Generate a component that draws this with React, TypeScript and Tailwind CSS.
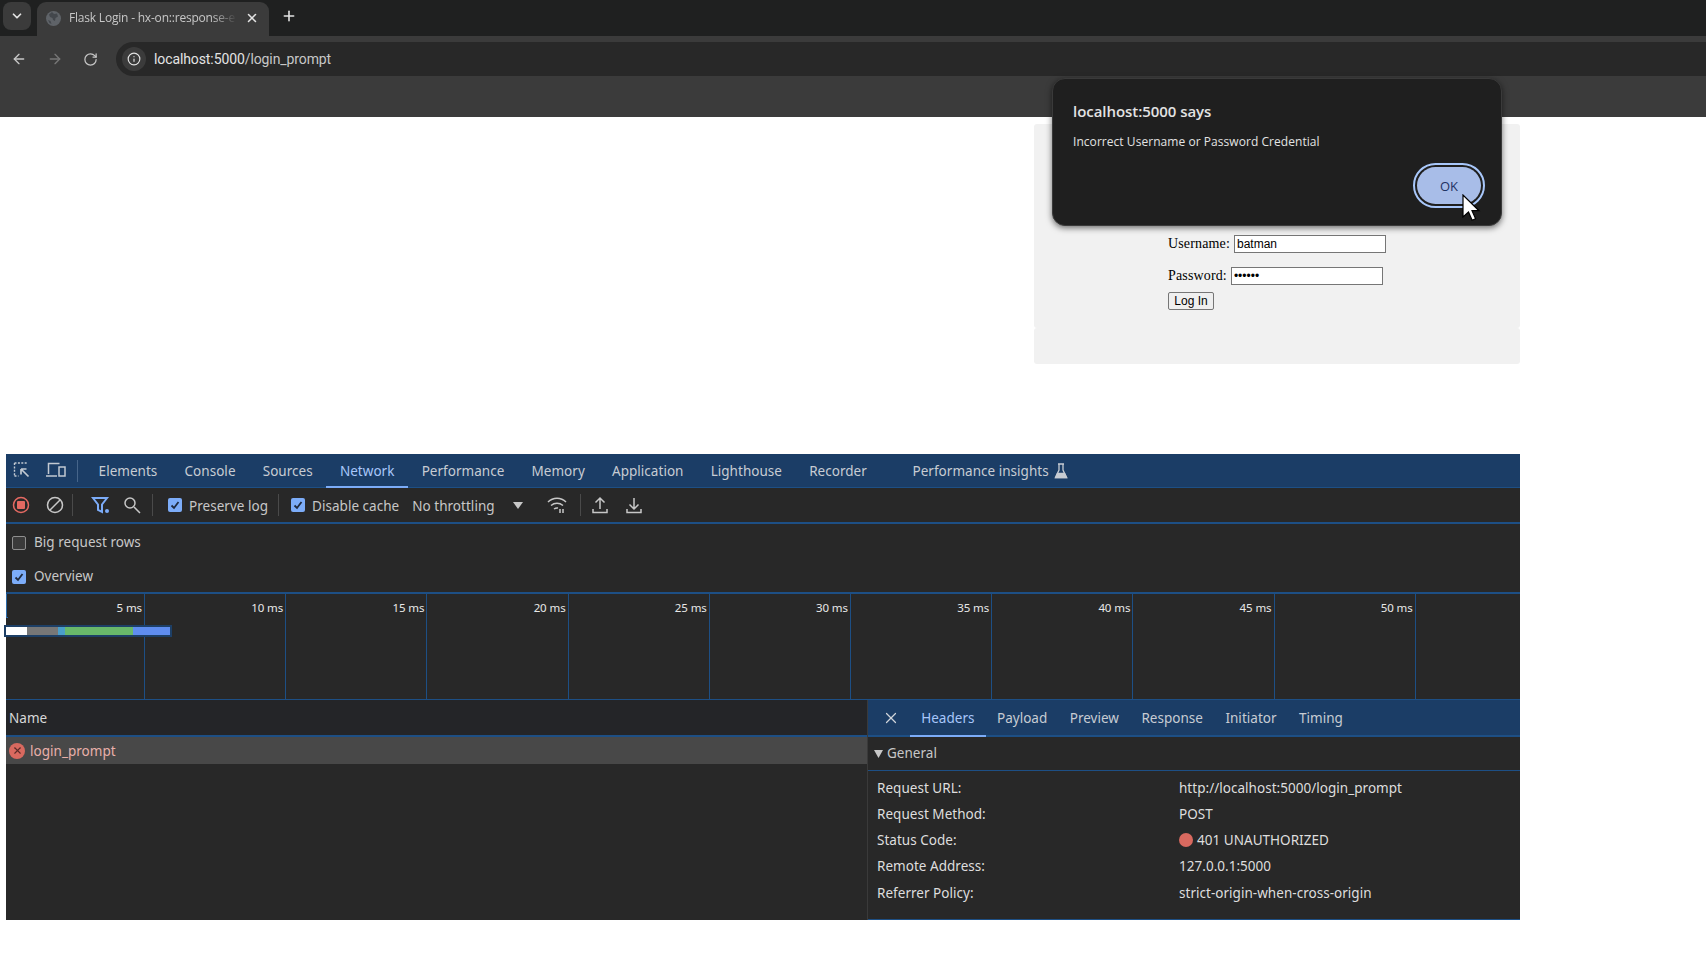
import { ArrowLeft, ArrowRight, RotateCw, Info, ChevronDown, X, Plus } from 'lucide-react'

const mainTabs = [
  { name: 'Elements' },
  { name: 'Console' },
  { name: 'Sources' },
  { name: 'Network', active: true },
  { name: 'Performance' },
  { name: 'Memory' },
  { name: 'Application' },
  { name: 'Lighthouse' },
  { name: 'Recorder' },
]

const detailTabs = ['Headers', 'Payload', 'Preview', 'Response', 'Initiator', 'Timing']

const ticks = ['5 ms', '10 ms', '15 ms', '20 ms', '25 ms', '30 ms', '35 ms', '40 ms', '45 ms', '50 ms']

const generalRows = [
  { label: 'Request URL:', value: 'http://localhost:5000/login_prompt' },
  { label: 'Request Method:', value: 'POST' },
  { label: 'Status Code:', value: '401 UNAUTHORIZED', status: true },
  { label: 'Remote Address:', value: '127.0.0.1:5000' },
  { label: 'Referrer Policy:', value: 'strict-origin-when-cross-origin' },
]

const Check = ({ checked }: { checked?: boolean }) =>
  checked ? (
    <span className="w-[14px] h-[14px] rounded-[2px] bg-[#7cacf8] flex items-center justify-center shrink-0">
      <svg width="10" height="10" viewBox="0 0 10 10" fill="none">
        <path d="M1.5 5.5 4 8l4.5-6" stroke="#1f2a3d" strokeWidth="1.8" />
      </svg>
    </span>
  ) : (
    <span className="w-[14px] h-[14px] rounded-[2px] border border-[#8e8e8e] bg-[#3a3a3a] shrink-0" />
  )

const Sep = ({ className }: { className: string }) => <span className={`w-px h-[22px] bg-[#4a4a4a] shrink-0 ${className}`} />

const Chrome = () => (
  <div className="h-[117px] bg-[#3b3b3b] shrink-0">
    {/* tab strip */}
    <div className="h-9 bg-[#1f2020] flex items-end">
      <div className="w-[28px] h-[28px] ml-[3px] mb-[6px] rounded-lg bg-[#3b3b3b] flex items-center justify-center text-[#e3e3e3]">
        <ChevronDown size={14} strokeWidth={3} />
      </div>
      <div className="w-[232px] h-[34px] ml-[6px] rounded-t-[9px] bg-[#3b3b3b] flex items-center pl-[9px] pb-[2px]">
        <svg className="shrink-0" width="15" height="15" viewBox="0 0 15 15">
          <circle cx="7.5" cy="7.5" r="7.5" fill="#5f6368" />
          <path d="M6 1 3 3.500 4 6l2.500 1 .5 2 2 1 .5-3L12 5.500 11 2.500 8 3z" fill="#43474c" />
          <path d="M2 9l2.500 1 1 3-2-1z" fill="#43474c" />
        </svg>
        <span className="ml-[8px] w-[168px] whitespace-nowrap text-[12px] text-[#c7c7c7] font-['Open_Sans',sans-serif] tracking-[-0.2px] [mask-image:linear-gradient(to_right,black_85%,transparent_100%)]">
          Flask Login - hx-on::response-e
        </span>
        <X size={14} strokeWidth={2.6} className="ml-[8px] text-[#e3e3e3]" />
      </div>
      <Plus size={16} strokeWidth={2.4} className="ml-[12px] mb-[12px] text-[#e3e3e3]" />
    </div>
    {/* address row */}
    <div className="h-[34px] mt-[6px] flex items-center">
      <ArrowLeft size={16} strokeWidth={2} className="ml-[11px] text-[#c7c7c7]" />
      <ArrowRight size={16} strokeWidth={2} className="ml-[20px] text-[#777777]" />
      <RotateCw size={15} strokeWidth={2} className="ml-[20px] text-[#c7c7c7]" />
      <div className="ml-[18px] flex-1 h-[34px] rounded-l-[17px] bg-[#282828] flex items-center pl-[6px]">
        <span className="w-6 h-6 rounded-full bg-[#3b3b3b] flex items-center justify-center">
          <Info size={14} strokeWidth={2} className="text-[#e3e3e3]" />
        </span>
        <span className="ml-[8px] text-[14px] text-[#e3e3e3] font-['Roboto',sans-serif] tracking-[-0.1px]">
          localhost:5000<span className="text-[#c7c7c7]">/login_prompt</span>
        </span>
      </div>
    </div>
  </div>
)

const LoginForm = () => (
  <div className="ml-auto mr-[186px] mt-[7px] w-[486px] font-['Liberation_Serif',serif] text-[14px] text-black">
    <div className="h-[204px] bg-[#f1f1f1] rounded-[3px] pl-[134px] pt-[111px]">
      <div className="flex items-center h-[17px]">
        <span className="tracking-[0.15px]">Username:</span>
        <input
          readOnly
          value="batman"
          className="ml-[4px] w-[152px] h-[18px] bg-white border border-[#767676] px-[2px] text-[12px] font-['Liberation_Sans',sans-serif] outline-none"
        />
      </div>
      <div className="flex items-center h-[17px] mt-[15px]">
        <span className="tracking-[0.15px]">Password:</span>
        <input
          readOnly
          type="password"
          value="batman"
          className="ml-[4px] w-[152px] h-[18px] bg-white border border-[#767676] px-[2px] text-[12px] font-['Liberation_Sans',sans-serif] outline-none"
        />
      </div>
      <button className="block mt-[8px] w-[46px] h-[18px] bg-[#efefef] border border-[#767676] rounded-[2px] text-[12px] leading-none font-['Liberation_Sans',sans-serif] text-black">
        Log In
      </button>
    </div>
    <div className="h-[36px] bg-[#f1f1f1] rounded-[3px]" />
  </div>
)

const AlertDialog = () => (
  <div className="absolute left-[1052px] top-[78px] w-[450px] h-[148px] rounded-[13px] bg-[#1f1f1f] border border-[#3a3a3a] shadow-[0_2px_6px_rgba(0,0,0,0.55)] font-['Open_Sans',sans-serif]">
    <div className="pl-[20px] pt-[22px] text-[15px] leading-[20px] font-semibold text-[#e3e3e3] tracking-[-0.05px]">localhost:5000 says</div>
    <div className="pl-[20px] pt-[12px] text-[12px] leading-[18px] text-[#e3e3e3] tracking-[0.05px]">Incorrect Username or Password Credential</div>
    <div className="absolute right-[16px] top-[84px] w-[72px] h-[45px] rounded-full border-2 border-[#a8c7fa] p-[2px] bg-[#1f1f1f]">
      <div className="w-full h-full rounded-full bg-[#a8bde8] flex items-center justify-center pt-[3px] text-[13px] text-[#1f3263]">OK</div>
    </div>
    <svg className="absolute left-[408px] top-[115px]" width="20" height="28" viewBox="0 0 20 28">
      <path d="M2 1v22l5.5-5 3.6 8.2 3.500-1.500-3.600-8H18z" fill="#fff" stroke="#000" strokeWidth="1.2" />
    </svg>
  </div>
)

const DevTools = () => (
  <div className="ml-[6px] w-[1514px] h-[466px] mt-[90px] bg-[#282828] flex flex-col font-['Noto_Sans',sans-serif] text-[13.5px] text-[#d0d0d0] tracking-[0.03px] whitespace-nowrap">
    {/* main tabs */}
    <div className="h-[34px] bg-[#1b3d66] border-b border-[#1d4f85] flex items-stretch shrink-0">
      <svg className="ml-[6px] mt-[6px]" width="20" height="20" viewBox="0 0 20 20" fill="none" stroke="#c2c9d2">
        <path d="M2.5 3h13M2.5 3v13M2.5 16h4" strokeDasharray="2 1.4" strokeWidth="1.4" />
        <path d="M9 9l7.5 7.5M9 9v5.5M9 9h5.5" strokeWidth="1.7" />
      </svg>
      <svg className="ml-[13px] mt-[6px]" width="22" height="20" viewBox="0 0 22 20" fill="none" stroke="#c2c9d2" strokeWidth="1.5">
        <path d="M3.5 14V3.5h11M1 16h11" />
        <rect x="14" y="7" width="6" height="9" />
      </svg>
      <span className="w-px h-[22px] bg-[#46658a] ml-[10px] mt-[6px]" />
      <div className="ml-[7px] flex items-stretch pt-[1px]">
        {mainTabs.map((t) => (
          <div
            key={t.name}
            className={`px-[13.6px] pt-[2px] flex items-center border-b-2 -mb-px ${t.active ? 'border-[#7cacf8] text-[#a8c7fa]' : 'border-transparent text-[#c7ccd3]'}`}
          >
            {t.name}
          </div>
        ))}
        <div className="ml-[32px] flex items-center text-[#c7ccd3]">
          Performance insights
          <svg className="ml-[5px]" width="14" height="18" viewBox="0 0 14 18" fill="none" stroke="#c7ccd3" strokeWidth="1.3">
            <path d="M4 2h6M5 2v6l-3.500 7.500h11L9 8V2" />
            <path d="M3.400 11.500h7.200l2 4h-11z" fill="#c7ccd3" />
          </svg>
        </div>
      </div>
    </div>
    {/* network toolbar */}
    <div className="h-[36px] border-b-2 border-[#1d4f85] flex items-center shrink-0 text-[#c7c7c7]">
      <svg className="ml-[6px] shrink-0" width="18" height="18" viewBox="0 0 18 18">
        <circle cx="9" cy="9" r="7.500" fill="none" stroke="#e46962" strokeWidth="1.500" />
        <rect x="5" y="5" width="8" height="8" rx="1" fill="#e46962" />
      </svg>
      <svg className="ml-[16px] shrink-0" width="18" height="18" viewBox="0 0 18 18" fill="none" stroke="#c7c7c7" strokeWidth="1.500">
        <circle cx="9" cy="9" r="7.500" />
        <path d="M14 4 4 14" />
      </svg>
      <Sep className="ml-[8px]" />
      <svg className="ml-[18px] shrink-0" width="20" height="20" viewBox="0 0 20 20">
        <path d="M2 3h14l-5 6.500V17l-4-2V9.500z" fill="none" stroke="#7cacf8" strokeWidth="2" />
        <circle cx="16" cy="16" r="2" fill="#7cacf8" />
      </svg>
      <svg className="ml-[12px] shrink-0" width="18" height="18" viewBox="0 0 18 18" fill="none" stroke="#c7c7c7" strokeWidth="1.500">
        <circle cx="7" cy="7" r="5" />
        <path d="M11 11l6 6" />
      </svg>
      <Sep className="ml-[11px]" />
      <span className="ml-[15px]"><Check checked /></span>
      <span className="ml-[7px] pt-[2px]">Preserve log</span>
      <Sep className="ml-[10px]" />
      <span className="ml-[12px]"><Check checked /></span>
      <span className="ml-[7px] pt-[2px]">Disable cache</span>
      <span className="ml-[13px] pt-[2px]">No throttling</span>
      <svg className="ml-[18px] shrink-0" width="10" height="7" viewBox="0 0 10 7">
        <path d="M0 0h10L5 7z" fill="#c7c7c7" />
      </svg>
      <svg className="ml-[24px] shrink-0" width="20" height="18" viewBox="0 0 20 18" fill="none" stroke="#c7c7c7" strokeWidth="1.500">
        <path d="M1 6c5-5 13-5 18 0M4 9.500c3.500-3 8.500-3 12 0M7 13c1.500-1 3-1.200 4-1" />
        <path d="M13 13v4M16 13v4" />
      </svg>
      <Sep className="ml-[13px]" />
      <svg className="ml-[11px] shrink-0" width="16" height="18" viewBox="0 0 16 18" fill="none" stroke="#c7c7c7" strokeWidth="1.500">
        <path d="M8 13V2M3.500 6.500 8 2l4.500 4.500M1 13v3.500h14V13" />
      </svg>
      <svg className="ml-[18px] shrink-0" width="16" height="18" viewBox="0 0 16 18" fill="none" stroke="#c7c7c7" strokeWidth="1.500">
        <path d="M8 2v11M3.500 8.500 8 13l4.500-4.500M1 13v3.500h14V13" />
      </svg>
    </div>
    {/* settings */}
    <div className="h-[70px] border-b-2 border-[#1d4f85] shrink-0 pl-[6px] pt-[10px] text-[#c7c7c7]">
      <div className="h-[17px] flex items-center gap-[8px]"><Check /> Big request rows</div>
      <div className="h-[17px] mt-[17px] flex items-center gap-[8px]"><Check checked /> Overview</div>
    </div>
    {/* overview timeline */}
    <div className="relative h-[106px] flex border-b border-[#1d4f85] shrink-0 text-[11.500px] text-[#e8e8e8] tracking-[-0.1px]">
      <div className="w-[139px] border-r border-[#1d4f85] text-right pr-[2px] pt-[5px]">{ticks[0]}</div>
      {ticks.slice(1).map((t) => (
        <div key={t} className="w-[141.200px] border-r border-[#1d4f85] text-right pr-[2px] pt-[5px]">{t}</div>
      ))}
      <div className="absolute left-0 top-0 h-[24px] w-[2px] border-l border-b border-[#2c6aa8]" />
      <div className="absolute left-0 top-[33px] h-[8px] w-[164px] flex shadow-[0_0_0_2px_#1d3f66]">
        <div className="w-[21px] bg-white" />
        <div className="w-[31px] bg-[#777777]" />
        <div className="w-[7px] bg-[#4a9ec9]" />
        <div className="w-[68px] bg-[#69b86a]" />
        <div className="w-[37px] bg-[#5f8df0]" />
      </div>
    </div>
    {/* requests and details */}
    <div className="flex-1 flex min-h-0">
      <div className="w-[862px] border-r border-[#3a3a3a] flex flex-col">
        <div className="h-[37px] bg-[#242528] border-b-2 border-[#1d4f85] flex items-center pl-[3px] pt-[2px] text-[#d8d8d8]">Name</div>
        <div className="h-[27px] bg-[#484848] flex items-center pl-[3px] text-[#e8b0aa]">
          <span className="w-[16px] h-[16px] rounded-full bg-[#d9695f] flex items-center justify-center">
            <X size={11} strokeWidth={2.4} className="text-[#5b2b28]" />
          </span>
          <span className="ml-[5px] pt-[2px]">login_prompt</span>
        </div>
      </div>
      <div className="flex-1 flex flex-col border-b border-[#1d4f85]">
        <div className="h-[37px] bg-[#1b3d66] border-b-2 border-[#1d4f85] flex items-stretch text-[#c7ccd3]">
          <X size={18} strokeWidth={1.600} className="ml-[14px] mt-[9px] mr-[10px] text-[#d0d5db]" />
          {detailTabs.map((t, i) => (
            <div
              key={t}
              className={`px-[11.200px] pt-[2px] flex items-center border-b-2 -mb-[2px] ${i === 0 ? 'border-[#7cacf8] text-[#a8c7fa]' : 'border-transparent'}`}
            >
              {t}
            </div>
          ))}
        </div>
        <div className="h-[34px] border-b border-[#1d4f85] flex items-center pl-[6px] text-[#c7c7c7]">
          <svg width="9" height="8" viewBox="0 0 9 8"><path d="M0 0h9L4.500 8z" fill="#c7c7c7" /></svg>
          <span className="ml-[4px]">General</span>
        </div>
        <div className="pt-[3px]">
          {generalRows.map((r) => (
            <div key={r.label} className="h-[26.300px] flex items-center pl-[9px] text-[#dedede]">
              <span className="w-[302px] pt-[1px]">{r.label}</span>
              {r.status && <span className="w-[14px] h-[14px] rounded-full bg-[#d9695f] mr-[4px]" />}
              <span className="pt-[1px]">{r.value}</span>
            </div>
          ))}
        </div>
      </div>
    </div>
  </div>
)

export default function App() {
  return (
    <div className="relative w-[1706px] h-[978px] bg-white overflow-hidden flex flex-col">
      <Chrome />
      <LoginForm />
      <DevTools />
      <AlertDialog />
    </div>
  )
}
